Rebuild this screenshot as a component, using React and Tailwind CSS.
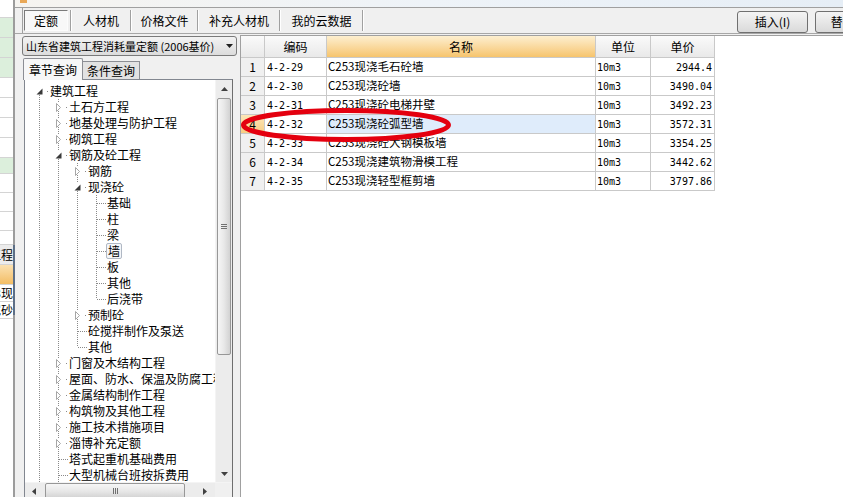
import React from 'react';

const DOT = '#8a8a8a';

function Guide({ on }) {
  return (
    <svg width="19" height="16" className="shrink-0 block" shapeRendering="crispEdges">
      {on && <line x1="9.5" y1="0" x2="9.5" y2="16" stroke={DOT} strokeDasharray="1 1" />}
    </svg>
  );
}

function Node({ kind, first, last }) {
  const exp = kind !== 'leaf';
  return (
    <svg width="19" height="16" className="shrink-0 block" shapeRendering="crispEdges">
      {exp ? (
        <>
          {!first && <line x1="9.5" y1="0" x2="9.5" y2="4" stroke={DOT} strokeDasharray="1 1" />}
          {!last && <line x1="9.5" y1="12" x2="9.5" y2="16" stroke={DOT} strokeDasharray="1 1" />}
          <rect x="17" y="8" width="1" height="1" fill={DOT} />
        </>
      ) : (
        <>
          <line x1="9.5" y1="0" x2="9.5" y2={last ? 8 : 16} stroke={DOT} strokeDasharray="1 1" />
          <line x1="10" y1="8.5" x2="19" y2="8.5" stroke={DOT} strokeDasharray="1 1" />
        </>
      )}
      {kind === 'closed' && (
        <polygon points="7.5,4.5 11.5,8.5 7.5,12.5" fill="white" stroke="#a6a6a6" strokeWidth="1" shapeRendering="geometricPrecision" />
      )}
      {kind === 'open' && (
        <polygon points="12.5,5.5 12.5,11.5 6.5,11.5" fill="#3a3a3a" shapeRendering="geometricPrecision" />
      )}
    </svg>
  );
}

const T = true;
const tree = [
  { l: '建筑工程', g: [], k: 'open', first: true },
  { l: '土石方工程', g: [T], k: 'closed' },
  { l: '地基处理与防护工程', g: [T], k: 'closed' },
  { l: '砌筑工程', g: [T], k: 'closed' },
  { l: '钢筋及砼工程', g: [T], k: 'open' },
  { l: '钢筋', g: [T, T], k: 'closed' },
  { l: '现浇砼', g: [T, T], k: 'open' },
  { l: '基础', g: [T, T, T], k: 'leaf' },
  { l: '柱', g: [T, T, T], k: 'leaf' },
  { l: '梁', g: [T, T, T], k: 'leaf' },
  { l: '墙', g: [T, T, T], k: 'leaf', sel: true },
  { l: '板', g: [T, T, T], k: 'leaf' },
  { l: '其他', g: [T, T, T], k: 'leaf' },
  { l: '后浇带', g: [T, T, T], k: 'leaf', last: true },
  { l: '预制砼', g: [T, T], k: 'closed' },
  { l: '砼搅拌制作及泵送', g: [T, T], k: 'leaf' },
  { l: '其他', g: [T, T], k: 'leaf', last: true },
  { l: '门窗及木结构工程', g: [T], k: 'closed' },
  { l: '屋面、防水、保温及防腐工程', g: [T], k: 'closed' },
  { l: '金属结构制作工程', g: [T], k: 'closed' },
  { l: '构筑物及其他工程', g: [T], k: 'closed' },
  { l: '施工技术措施项目', g: [T], k: 'closed' },
  { l: '淄博补充定额', g: [T], k: 'closed' },
  { l: '塔式起重机基础费用', g: [T], k: 'leaf' },
  { l: '大型机械台班按拆费用', g: [T], k: 'leaf' },
];

function TreeRow({ r }) {
  return (
    <div className="flex h-[16px] items-center whitespace-nowrap shrink-0">
      <div className="w-[5px] shrink-0" />
      {r.g.map((g, i) => (
        <Guide key={i} on={g} />
      ))}
      <Node kind={r.k} first={r.first} last={r.last} />
      {r.sel ? (
        <span className="ml-[0px] text-[12px] leading-[14px] px-[1px] border border-[#b0b8c4] rounded-[2px] bg-[#f4f6f9]">{r.l}</span>
      ) : (
        <span className="ml-[1px] text-[12px] leading-[16px]">{r.l}</span>
      )}
    </div>
  );
}

function VScroll() {
  return (
    <div className="w-[17px] shrink-0 flex flex-col bg-[#ececec] border-l border-[#f4f4f4]">
      <div className="h-[17px] shrink-0 flex items-center justify-center">
        <svg width="7" height="4"><polygon points="0,4 3.5,0 7,4" fill="#404040" /></svg>
      </div>
      <div className="mt-[1px] h-[257px] shrink-0 mx-[1px] rounded-[2px] border border-[#979797] bg-gradient-to-r from-[#f6f6f6] via-[#e8e8e8] to-[#d2d2d2] flex items-center justify-center">
        <div className="flex flex-col gap-[1px]">
          <div className="w-[6px] h-[1px] bg-[#707070]" />
          <div className="w-[6px] h-[1px] bg-[#707070]" />
          <div className="w-[6px] h-[1px] bg-[#707070]" />
        </div>
      </div>
      <div className="flex-1" />
      <div className="h-[17px] shrink-0 flex items-center justify-center">
        <svg width="7" height="4"><polygon points="0,0 7,0 3.5,4" fill="#404040" /></svg>
      </div>
    </div>
  );
}

function HScroll() {
  return (
    <div className="h-[17px] shrink-0 flex bg-[#ececec] border-t border-[#f4f4f4]">
      <div className="w-[190px] flex items-stretch">
        <div className="w-[18px] shrink-0 flex items-center justify-center">
          <svg width="4" height="7"><polygon points="4,0 0,3.5 4,7" fill="#404040" /></svg>
        </div>
        <div className="ml-[2px] w-[140px] shrink-0 rounded-[2px] border border-[#979797] bg-gradient-to-b from-[#f6f6f6] via-[#e8e8e8] to-[#d2d2d2] flex items-center justify-center">
          <div className="flex gap-[1px]">
            <div className="w-[1px] h-[6px] bg-[#707070]" />
            <div className="w-[1px] h-[6px] bg-[#707070]" />
            <div className="w-[1px] h-[6px] bg-[#707070]" />
          </div>
        </div>
        <div className="flex-1 flex items-center justify-end pr-[8px]">
          <svg width="4" height="7"><polygon points="0,0 4,3.5 0,7" fill="#404040" /></svg>
        </div>
      </div>
      <div className="flex-1 bg-[#f0f0f0]" />
    </div>
  );
}

function LeftPanel() {
  return (
    <div className="w-[225px] shrink-0 flex flex-col pl-[7px]">
      <div className="mt-[2px] h-[20px] w-[215px] shrink-0 rounded-[3px] border border-[#7a7a7a] bg-gradient-to-b from-[#f3f3f3] to-[#dcdcdc] flex items-center">
        <div className="w-[196px] overflow-hidden whitespace-nowrap pl-[3px] text-[11px] leading-[18px]">山东省建筑工程消耗量定额 (2006基价)</div>
        <svg width="7" height="4" className="ml-[7px]"><polygon points="0,0 7,0 3.5,4" fill="#202020" /></svg>
      </div>
      <div className="mt-[2px] h-[21px] shrink-0 flex items-end">
        <div className="ml-[1px] w-[60px] h-[22px] flex items-center justify-center text-[12px] border border-b-0 border-[#8c8e94] bg-[#f7f7f7] rounded-t-[2px] relative top-[1px]">章节查询</div>
        <div className="w-[57px] h-[18px] flex items-center justify-center text-[12px] border border-l-0 border-b-0 border-[#8c8e94] bg-[#e2e2e2]">条件查询</div>
      </div>
      <div className="ml-[2px] w-[209px] h-[421px] shrink-0 border border-[#828790] border-r-[#6e6e6e] bg-white flex flex-col">
        <div className="flex-1 flex min-h-0">
          <div className="w-[190px] overflow-hidden pt-[3px] flex flex-col">
            {tree.map((r, i) => (
              <TreeRow key={i} r={r} />
            ))}
          </div>
          <VScroll />
        </div>
        <HScroll />
      </div>
    </div>
  );
}

const rows = [
  ['1', '4-2-29', 'C253现浇毛石砼墙', '10m3', '2944.4'],
  ['2', '4-2-30', 'C253现浇砼墙', '10m3', '3490.04'],
  ['3', '4-2-31', 'C253现浇砼电梯井壁', '10m3', '3492.23'],
  ['4', '4-2-32', 'C253现浇砼弧型墙', '10m3', '3572.31'],
  ['5', '4-2-33', 'C253现浇砼大钢模板墙', '10m3', '3354.25'],
  ['6', '4-2-34', 'C253现浇建筑物滑模工程', '10m3', '3442.62'],
  ['7', '4-2-35', 'C253现浇轻型框剪墙', '10m3', '3797.86'],
];

function Grid() {
  const B = 'border-r border-b border-[#c9c9c9] shrink-0';
  const mono = "font-['DejaVu_Sans_Mono',monospace] text-[10px]";
  return (
    <div className="flex-1 mt-[1px] border-l border-t border-[#a0a0a0] bg-white">
      <div className="flex h-[22px] text-[12px]">
        <div className={`${B} w-[24px] bg-gradient-to-b from-[#fafafa] to-[#e9e9e9]`} />
        <div className={`${B} w-[62px] bg-gradient-to-b from-[#fafafa] to-[#e9e9e9] flex items-center justify-center`}>编码</div>
        <div className={`${B} w-[269px] bg-gradient-to-b from-[#fdefcf] to-[#f6c46c] flex items-center justify-center`}>名称</div>
        <div className={`${B} w-[55px] bg-gradient-to-b from-[#fafafa] to-[#e9e9e9] flex items-center justify-center`}>单位</div>
        <div className={`${B} w-[64px] bg-gradient-to-b from-[#fafafa] to-[#e9e9e9] flex items-center justify-center`}>单价</div>
      </div>
      {rows.map((r, i) => {
        const sel = i === 3;
        return (
          <div key={i} className="flex h-[19px]">
            <div className={`${B} w-[24px] flex items-center justify-center text-[12px] ${sel ? 'bg-gradient-to-b from-[#fde7b8] to-[#f7cd83]' : 'bg-[#f0f0f0]'}`}>{r[0]}</div>
            <div className={`${B} w-[62px] flex items-center pl-[2px] ${mono}`}>{r[1]}</div>
            <div className={`${B} w-[269px] flex items-center pl-[1px] text-[11.5px] whitespace-nowrap ${sel ? 'bg-[#dfecfb]' : ''}`}>{r[2]}</div>
            <div className={`${B} w-[55px] flex items-center pl-[1px] ${mono}`}>{r[3]}</div>
            <div className={`${B} w-[64px] flex items-center justify-end pr-[2px] ${mono}`}>{r[4]}</div>
          </div>
        );
      })}
    </div>
  );
}

function Tabs() {
  const sep = <div className="w-[2px] h-[21px] shrink-0 border-l border-[#a0a0a0] border-r border-r-white" />;
  return (
    <div className="flex h-[26px] shrink-0 border-b border-[#a7a7a7]">
      <div className="ml-[7px] flex items-center border-l border-[#a0a0a0] shrink-0">
        <div className="ml-[1px] w-[44px] h-[21px] flex items-center justify-center text-[12px] border border-[#7b7b7b] border-r-[#fcfcfc] border-b-[#fcfcfc] bg-[#f8f8f8]">定额</div>
        <div className="w-[2px]" />
        {sep}
        <div className="w-[58px] text-center text-[12px]">人材机</div>
        {sep}
        <div className="w-[65px] text-center text-[12px]">价格文件</div>
        {sep}
        <div className="w-[80px] text-center text-[12px]">补充人材机</div>
        {sep}
        <div className="w-[81px] text-center text-[12px]">我的云数据</div>
        {sep}
      </div>
      <div className="ml-[373px] flex items-start pt-[3px] gap-[7px] shrink-0">
        <div className="w-[71px] h-[22px] shrink-0 rounded-[3px] border border-[#707070] bg-gradient-to-b from-[#f4f4f4] to-[#dadada] flex items-center justify-center text-[12px]">插入(I)</div>
        <div className="w-[71px] h-[22px] shrink-0 rounded-[3px] border border-[#707070] bg-gradient-to-b from-[#f4f4f4] to-[#dadada] flex items-center justify-center text-[12px]">替换(R)</div>
      </div>
    </div>
  );
}

const strip = [
  [18, 'bg-white', ''],
  [20, 'bg-[#dcefdc]', ''],
  [20, 'bg-[#dcefdc]', ''],
  [20, 'bg-[#dcefdc]', ''],
  [20, 'bg-white', ''],
  [20, 'bg-white', ''],
  [20, 'bg-white', ''],
  [20, 'bg-white', ''],
  [16, 'bg-[#dcefdc]', ''],
  [19, 'bg-white', ''],
  [19, 'bg-white', ''],
  [19, 'bg-white', ''],
  [14, 'bg-white', ''],
  [20, 'bg-[#ececec]', '工程'],
  [20, 'bg-gradient-to-b from-[#fbe1b0] to-[#f3bd63]', ''],
  [17, 'bg-white', 'C253现'],
  [17, 'bg-white', '水泥砂'],
];

function LeftStrip() {
  return (
    <div className="w-[13px] shrink-0 flex flex-col bg-white overflow-hidden">
      {strip.map(([h, bg, t], i) => (
        <div key={i} style={{ height: h }} className={`${bg} shrink-0 border-b border-[#d4d4d4] flex items-center justify-end overflow-hidden whitespace-nowrap text-[12px] leading-none`}>
          {t}
        </div>
      ))}
      <div className="flex-1 bg-white" />
    </div>
  );
}

function Frame() {
  return (
    <div className="w-[2px] shrink-0 flex flex-col">
      <div className="h-[245px] bg-[#9c9c9c]" />
      <div className="h-[70px] bg-[#5e6f86]" />
      <div className="flex-1 bg-[#9c9c9c]" />
    </div>
  );
}

export default function App() {
  return (
    <div className="relative w-[843px] h-[497px] overflow-hidden flex bg-white text-black font-['Noto_Sans_CJK_SC',sans-serif]">
      <LeftStrip />
      <Frame />
      <div className="w-[828px] shrink-0 flex flex-col bg-[#f0f0f0]">
        <div className="h-[8px] shrink-0 bg-gradient-to-r from-[#f6f4f0] via-[#eef3f8] to-[#e6eef6] border-b border-[#a0a0a0] flex">
          <div className="ml-[5px] w-[7px] h-[3px] bg-[#e9a857]" />
        </div>
        <Tabs />
        <div className="flex-1 flex min-h-0">
          <LeftPanel />
          <Grid />
        </div>
      </div>
      <svg className="absolute left-0 top-0 pointer-events-none" width="843" height="497">
        <ellipse cx="346" cy="125" rx="102.5" ry="14.5" fill="none" stroke="#e4000f" strokeWidth="5" />
      </svg>
    </div>
  );
}
